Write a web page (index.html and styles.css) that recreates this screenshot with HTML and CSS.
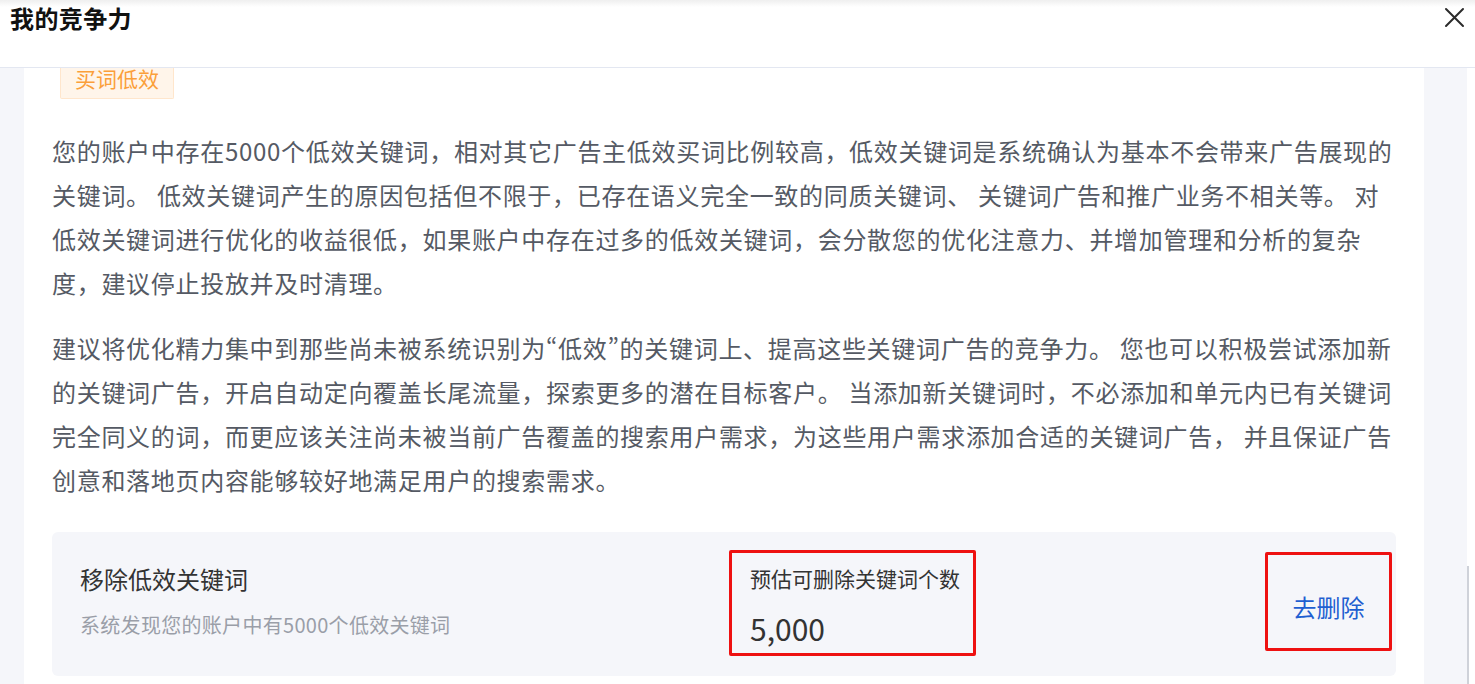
FILE: index.html
```html
<!DOCTYPE html>
<html lang="zh-CN">
<head>
<meta charset="utf-8">
<title>我的竞争力</title>
<link rel="stylesheet" href="styles.css">
</head>
<body>
<div class="modal">
  <header class="modal-header">
    <h1 class="modal-title">我的竞争力</h1>
    <button class="close-btn" aria-label="关闭">
      <svg width="21" height="21" viewBox="0 0 21 21"><path d="M2 2 L19 19 M19 2 L2 19" stroke="#2b2b2b" stroke-width="2" fill="none" stroke-linecap="round"/></svg>
    </button>
  </header>
  <div class="modal-body">
    <div class="viewport">
      <section class="card">
        <span class="tag">买词低效</span>
        <p class="para first">您的账户中存在5000个低效关键词，相对其它广告主低效买词比例较高，低效关键词是系统确认为基本不会带来广告展现的关键词。 低效关键词产生的原因包括但不限于，已存在语义完全一致的同质关键词、 关键词广告和推广业务不相关等。 对低效关键词进行优化的收益很低，如果账户中存在过多的低效关键词，会分散您的优化注意力、并增加管理和分析的复杂度，建议停止投放并及时清理。</p>
        <p class="para">建议将优化精力集中到那些尚未被系统识别为<span class="q">“低效”</span>的关键词上、提高这些关键词广告的竞争力。 您也可以积极尝试添加新的关键词广告，开启自动定向覆盖长尾流量，探索更多的潜在目标客户。 当添加新关键词时，不必添加和单元内已有关键词完全同义的词，而更应该关注尚未被当前广告覆盖的搜索用户需求，为这些用户需求添加合适的关键词广告， 并且保证广告创意和落地页内容能够较好地满足用户的搜索需求。</p>
        <div class="action-box">
          <div class="action-info">
            <div class="action-title">移除低效关键词</div>
            <div class="action-desc">系统发现您的账户中有5000个低效关键词</div>
          </div>
          <div class="stat marked">
            <div class="stat-label">预估可删除关键词个数</div>
            <div class="stat-value">5,000</div>
          </div>
          <div class="link-wrap marked">
            <a class="action-link" href="#">去删除</a>
          </div>
        </div>
      </section>
    </div>
    <div class="scroll-track"><div class="scroll-thumb"></div></div>
  </div>
</div>
</body>
</html>
```

FILE: styles.css
```css
* { box-sizing: border-box; }
html, body { margin: 0; padding: 0; }
body {
  background: #ffffff;
  font-family: "Noto Sans CJK SC", "Noto Sans", sans-serif;
  color: #333;
  width: 1475px;
  height: 684px;
  overflow: hidden;
}
.modal {
  width: 1475px;
  height: 684px;
  display: flex;
  flex-direction: column;
}
.modal-header {
  height: 68px;
  flex: none;
  display: flex;
  justify-content: space-between;
  align-items: flex-start;
  padding: 0 10px;
  background: linear-gradient(#efefef, #ffffff 7px);
  border-bottom: 1px solid #e3e7f1;
}
.modal-title {
  margin: 0;
  font-size: 24px;
  line-height: 36px;
  font-weight: 700;
  color: #111;
  letter-spacing: 0.4px;
}
.close-btn {
  margin: 7px 0 0 0;
  padding: 0;
  border: 0;
  background: transparent;
  width: 21px;
  height: 21px;
  display: flex;
}
.modal-body {
  flex: 1;
  display: flex;
  min-height: 0;
}
.viewport {
  flex: 1;
  background: #f5f6fa;
  padding: 0 43px 0 24px;
  overflow: hidden;
}
.card {
  background: #ffffff;
  height: 100%;
  padding: 0 28px;
  overflow: hidden;
}
.tag {
  display: block;
  width: max-content;
  height: 31px;
  line-height: 21px;
  padding: 0 14px;
  margin-left: 8px;
  font-size: 21px;
  color: #fb9f3a;
  background: #fff5ea;
  border: 1px solid #ffe6cc;
  border-top: 0;
  border-radius: 0 0 2px 2px;
}
.para {
  margin: 21px 0 0 0;
  font-size: 24px;
  line-height: 44px;
  letter-spacing: 0.7px;
  color: #555a64;
  text-align: left;
}
.para.first { margin-top: 30px; }
.q {
  font-feature-settings: "pwid" 1;
}
.action-box {
  margin-top: 30px;
  height: 144px;
  background: #f5f6fa;
  border-radius: 6px;
  display: grid;
  grid-template-columns: 649px 247px 1fr;
  padding: 0 4px 0 28px;
}
.action-info {
  padding-top: 31px;
}
.action-title {
  font-size: 24px;
  line-height: 32px;
  color: #333;
}
.action-desc {
  margin-top: 16px;
  font-size: 20px;
  line-height: 28px;
  color: #9a9ea8;
  letter-spacing: 0.3px;
}
.marked {
  border: 3px solid #ee1111;
  border-radius: 2px;
}
.stat {
  margin-top: 18px;
  height: 106px;
  padding: 10px 0 0 18px;
}
.stat-label {
  font-size: 21px;
  line-height: 30px;
  color: #333;
}
.stat-value {
  margin-top: 15px;
  font-size: 30px;
  line-height: 40px;
  color: #333;
}
.link-wrap {
  justify-self: end;
  margin-top: 20px;
  width: 127px;
  height: 99px;
  display: flex;
  align-items: center;
  justify-content: center;
  padding-top: 10px;
}
.action-link {
  font-size: 24px;
  color: #1f5fd1;
  text-decoration: none;
}
.scroll-track {
  width: 8px;
  flex: none;
  background: #ffffff;
  display: flex;
  flex-direction: column;
}
.scroll-thumb {
  margin-top: auto;
  height: 118px;
  border-left: 2px solid #cfd2d9;
}
```
